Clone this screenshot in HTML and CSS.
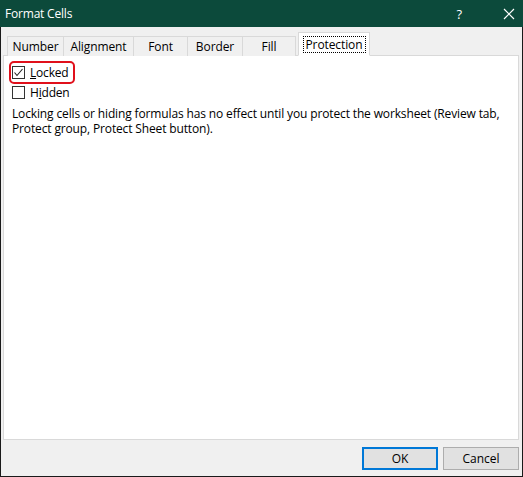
FILE: index.html
```html
<!DOCTYPE html>
<html>
<head>
<meta charset="utf-8">
<link rel="stylesheet" href="styles.css">
</head>
<body>
<div class="window">
  <div class="titlebar">
    <span class="title">Format Cells</span>
    <div class="controls">
      <span class="help">?</span>
      <svg class="close" width="12" height="12" viewBox="0 0 12 12"><path d="M1 1 L11 11 M11 1 L1 11" stroke="#fff" stroke-width="1.2" fill="none"/></svg>
    </div>
  </div>
  <div class="body">
    <div class="tabs">
      <div class="tab t-number">Number</div>
      <div class="tab t-align">Alignment</div>
      <div class="tab t-font">Font</div>
      <div class="tab t-border">Border</div>
      <div class="tab t-fill">Fill</div>
      <div class="tab active"><span class="focus">Protection</span></div>
    </div>
    <div class="panel">
      <div class="row locked">
        <span class="box"><svg width="13" height="13" viewBox="0 0 13 13"><path d="M2.5 6.5 L5 9.5 L10.5 3" stroke="#222" stroke-width="1.1" fill="none"/></svg></span>
        <span><u>L</u>ocked</span>
      </div>
      <div class="row hidden-row">
        <span class="box"></span>
        <span>H<u>i</u>dden</span>
      </div>
      <p class="note">Locking cells or hiding formulas has no effect until you protect the worksheet (Review tab, Protect group, Protect Sheet button).</p>
    </div>
    <div class="buttons">
      <button class="btn default">OK</button>
      <button class="btn">Cancel</button>
    </div>
  </div>
</div>
</body>
</html>
```
FILE: styles.css
```css
html, body {
  margin: 0;
  padding: 0;
}
body {
  width: 523px;
  height: 477px;
  font-family: "Segoe UI", "Open Sans", "Noto Sans", sans-serif;
  font-size: 12px;
  color: #000;
}
.window {
  box-sizing: border-box;
  width: 523px;
  height: 477px;
  border: 1px solid #1a1a1a;
  border-top: none;
  background: #f0f0f0;
  display: flex;
  flex-direction: column;
}
.titlebar {
  height: 27px;
  background: #0c4a3b;
  color: #fff;
  display: flex;
  align-items: center;
  justify-content: space-between;
  padding-left: 5px;
  margin: 0 -1px;
}
.title {
  font-size: 12px;
  letter-spacing: -0.2px;
}
.controls {
  display: flex;
  align-items: center;
}
.help {
  font-size: 13px;
  margin-right: 41px;
}
.close {
  margin-right: 8px;
}
.body {
  flex: 1;
  display: flex;
  flex-direction: column;
  padding: 0 3px 0 2px;
}
.tabs {
  display: flex;
  align-items: flex-end;
  height: 29px;
  padding-left: 4px;
  margin-bottom: -1px;
  position: relative;
  z-index: 1;
  letter-spacing: -0.1px;
}
.tab {
  box-sizing: border-box;
  height: 20px;
  border: 1px solid #d9d9d9;
  border-right: none;
  border-bottom: none;
  background: #f0f0f0;
  display: flex;
  align-items: center;
  justify-content: center;
}
.t-number { width: 56px; }
.t-align { width: 70px; }
.t-font { width: 54px; }
.t-border { width: 55px; }
.t-fill { width: 54px; border-right: 1px solid #d9d9d9; }
.tab.active {
  width: 72px;
  height: 24px;
  margin-left: 2px;
  background: #fff;
  border: 1px solid #d9d9d9;
  border-bottom: 1px solid #fff;
}
.focus {
  outline: 1px dotted #000;
  padding: 0 2px;
  line-height: 15px;
}
.panel {
  box-sizing: border-box;
  height: 385px;
  background: #fff;
  border: 1px solid #d9d9d9;
  padding: 6px 0 0 8px;
}
.row {
  display: flex;
  align-items: center;
  gap: 5px;
  height: 19px;
}
.locked {
  outline: 2px solid #e0101b;
  border-radius: 3px;
  width: 61px;
  margin-left: -1px;
  padding-left: 1px;
  margin-top: 1px;
  letter-spacing: -0.2px;
}
.hidden-row {
  margin-top: 1px;
  letter-spacing: -0.2px;
}
.box {
  box-sizing: border-box;
  width: 13px;
  height: 13px;
  border: 1px solid #333;
  background: #fff;
  display: flex;
  align-items: center;
  justify-content: center;
}
.box svg {
  flex: none;
}
.note {
  margin: 4px 0 0 0;
  line-height: 15px;
  width: 505px;
  letter-spacing: -0.14px;
}
.buttons {
  display: flex;
  justify-content: flex-end;
  gap: 5px;
  padding-top: 7px;
}
.btn {
  box-sizing: border-box;
  width: 76px;
  height: 23px;
  background: #e1e1e1;
  border: 1px solid #adadad;
  font-family: inherit;
  font-size: 12px;
  color: #000;
  padding: 0;
}
.btn.default {
  border: 2px solid #0078d7;
}
```
